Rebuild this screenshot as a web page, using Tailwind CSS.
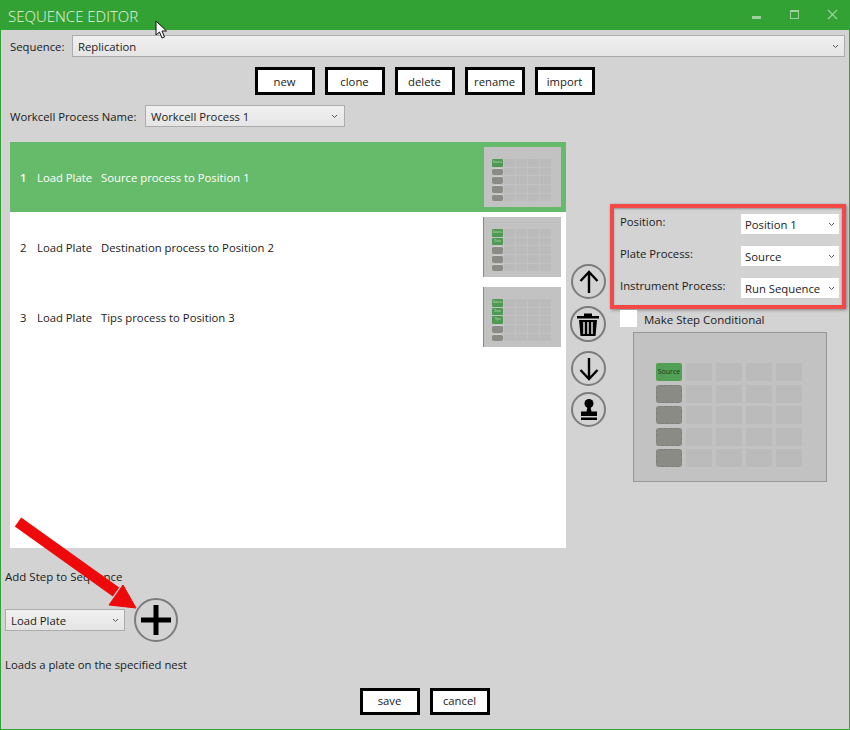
<!DOCTYPE html>
<html>
<head>
    <title>Sequence Editor</title>
    <script src="https://cdn.jsdelivr.net/npm/@tailwindcss/browser@4"></script>
</head>
<body class="bg-[#d3d3d3]">
    <div class="relative w-[850px] h-[730px] overflow-hidden flex flex-col bg-[#d3d3d3] border-x border-b border-[#33a235] font-['Open_Sans',sans-serif] text-[11.3px] text-[#1a1a1a]">
        <!-- title bar -->
        <div class="h-[30px] shrink-0 -mx-px bg-[#33a235] flex items-center justify-between pl-2 pr-[11px]">
            <span class="mt-[2px] text-[#e8f4e0] text-[15px] font-light">SEQUENCE EDITOR</span>
            <div class="flex items-center gap-[25px]">
                <svg width="13" height="12" viewBox="0 0 13 12"><rect x="2" y="7" width="9" height="3" fill="#9ed09f"/></svg>
                <svg width="13" height="12" viewBox="0 0 13 12"><rect x="2.500" y="1.500" width="8" height="8" fill="none" stroke="#9ed09f"/><rect x="2" y="1" width="9" height="2" fill="#9ed09f"/></svg>
                <svg width="13" height="12" viewBox="0 0 13 12"><path d="M2 1l9 9M11 1l-9 9" stroke="#9ed09f" stroke-width="1.200"/></svg>
            </div>
        </div>

        <!-- sequence selector -->
        <div class="flex items-center mt-[5px] pl-[9px] pr-1 h-[22px]">
            <span class="w-[62px] mt-[2px]">Sequence:</span>
            <div class="flex-1 h-full flex items-center justify-between px-[5px] border border-[#acacac] bg-gradient-to-b from-[#f0f0f0] to-[#e5e5e5]">
                <span class="mt-[2px]">Replication</span>
                <svg width="7" height="5" viewBox="0 0 7 5"><path d="M1 1l2.500 2.500L6 1" fill="none" stroke="#555" stroke-width="1"/></svg>
            </div>
        </div>

        <!-- sequence actions -->
        <div class="flex justify-center gap-[10px] mt-[10px] h-[28px] pr-[1px]">
            <button class="w-[60px] pt-[2px] border-[3px] border-black bg-white font-medium">new</button>
            <button class="w-[60px] pt-[2px] border-[3px] border-black bg-white font-medium">clone</button>
            <button class="w-[60px] pt-[2px] border-[3px] border-black bg-white font-medium">delete</button>
            <button class="w-[60px] pt-[2px] border-[3px] border-black bg-white font-medium">rename</button>
            <button class="w-[60px] pt-[2px] border-[3px] border-black bg-white font-medium">import</button>
        </div>

        <!-- workcell process -->
        <div class="flex items-center mt-[10px] pl-[9px] h-[22px]">
            <span class="w-[135px] mt-[2px]">Workcell Process Name:</span>
            <div class="w-[200px] h-full flex items-center justify-between px-[5px] border border-[#acacac] bg-gradient-to-b from-[#f0f0f0] to-[#e5e5e5]">
                <span class="mt-[2px]">Workcell Process 1</span>
                <svg width="7" height="5" class="mr-[1px]" viewBox="0 0 7 5"><path d="M1 1l2.500 2.500L6 1" fill="none" stroke="#555" stroke-width="1"/></svg>
            </div>
        </div>

        <!-- steps and step detail -->
        <div class="flex mt-[15px] pl-[9px] h-[406px]">
            <div class="w-[556px] h-full bg-white">
                <div class="h-[70px] bg-[#66bb6a] text-white flex items-center justify-between pl-[10px] pr-[5px]">
                    <div class="flex mt-[2px]"><span class="w-[17px] font-semibold">1</span><span class="w-[64px]">Load Plate</span><span>Source process to Position 1</span></div>
                    <div data-thumb="Source" class="w-[77px] h-[60px] bg-[#c2c2c2] pl-[8px] pt-[12px] grid grid-cols-[11px_11px_11px_11px_11px] auto-rows-[7.500px] gap-x-px gap-y-[1.200px]"></div>
                </div>
                <div class="h-[70px] flex items-center justify-between pl-[10px] pr-[5px]">
                    <div class="flex mt-[2px]"><span class="w-[17px]">2</span><span class="w-[64px]">Load Plate</span><span>Destination process to Position 2</span></div>
                    <div data-thumb="Source,Dest" class="w-[78px] h-[60px] bg-[#c2c2c2] border-l border-[#888] pl-[8px] pt-[12px] grid grid-cols-[11px_11px_11px_11px_11px] auto-rows-[7.500px] gap-x-px gap-y-[1.200px]"></div>
                </div>
                <div class="h-[70px] flex items-center justify-between pl-[10px] pr-[5px]">
                    <div class="flex mt-[2px]"><span class="w-[17px]">3</span><span class="w-[64px]">Load Plate</span><span>Tips process to Position 3</span></div>
                    <div data-thumb="Source,Dest,Tips" class="w-[78px] h-[60px] bg-[#c2c2c2] border-l border-[#888] pl-[8px] pt-[12px] grid grid-cols-[11px_11px_11px_11px_11px] auto-rows-[7.500px] gap-x-px gap-y-[1.200px]"></div>
                </div>
            </div>

            <!-- step buttons -->
            <div class="w-[35px] ml-[5px] mt-[122px] flex flex-col">
                <div class="w-[35px] h-[35px] rounded-full border-2 border-[#7c7c7c] flex items-center justify-center">
                    <svg width="24" height="26" viewBox="0 0 24 26"><path d="M12 24V3M3.500 12l8.500-9 8.500 9" fill="none" stroke="#000" stroke-width="2.400"/></svg>
                </div>
                <div class="w-[36px] h-[36px] mt-[7px] -ml-px rounded-full border-2 border-[#7c7c7c] flex items-center justify-center">
                    <svg width="24" height="25" viewBox="0 0 24 25"><path d="M1 4h22v2.500H1zM8 4V1.500h8V4" fill="#000"/><path d="M3 8h18l-1.500 16h-15z" fill="#000"/><path d="M8 10v12M12 10v12M16 10v12" stroke="#d3d3d3" stroke-width="1.600"/></svg>
                </div>
                <div class="w-[35px] h-[35px] mt-[9px] rounded-full border-2 border-[#7c7c7c] flex items-center justify-center">
                    <svg width="24" height="26" viewBox="0 0 24 26"><path d="M12 2v21M3.500 14l8.500 9 8.500-9" fill="none" stroke="#000" stroke-width="2.400"/></svg>
                </div>
                <div class="w-[35px] h-[35px] mt-[6px] rounded-full border-2 border-[#7c7c7c] flex items-center justify-center">
                    <svg width="24" height="24" viewBox="0 0 24 24"><circle cx="12" cy="5.500" r="4.500" fill="#000"/><path d="M10.500 9h3l1 4.500h-5zM4 13.500h16v4.500H4zM4 19.500h16V22H4z" fill="#000"/></svg>
                </div>
            </div>

            <!-- step detail -->
            <div class="ml-[4px] mt-[62px] w-[236px] flex flex-col">
                <div class="h-[105px] border-4 border-[#f44848] shadow-[1px_1px_3px_rgba(0,0,0,0.4),inset_0_1px_2px_rgba(0,0,0,0.3)] pl-[6px] pr-[2px] pt-[5px] flex flex-col gap-[10px]">
                    <div class="flex items-center justify-between h-[22px]">
                        <span class="-mt-[4px]">Position:</span>
                        <div class="w-[100px] h-full bg-white border border-[#d3d3d3] flex items-center justify-between pl-[4px] pr-[4px]"><span class="mt-[2px]">Position 1</span><svg width="7" height="5" viewBox="0 0 7 5"><path d="M1 1l2.500 2.500L6 1" fill="none" stroke="#555"/></svg></div>
                    </div>
                    <div class="flex items-center justify-between h-[22px]">
                        <span class="-mt-[4px]">Plate Process:</span>
                        <div class="w-[100px] h-full bg-white border border-[#d3d3d3] flex items-center justify-between pl-[4px] pr-[4px]"><span class="mt-[2px]">Source</span><svg width="7" height="5" viewBox="0 0 7 5"><path d="M1 1l2.500 2.500L6 1" fill="none" stroke="#555"/></svg></div>
                    </div>
                    <div class="flex items-center justify-between h-[22px]">
                        <span class="-mt-[4px]">Instrument Process:</span>
                        <div class="w-[100px] h-full bg-white border border-[#d3d3d3] flex items-center justify-between pl-[4px] pr-[4px]"><span class="mt-[2px]">Run Sequence</span><svg width="7" height="5" viewBox="0 0 7 5"><path d="M1 1l2.500 2.500L6 1" fill="none" stroke="#555"/></svg></div>
                    </div>
                </div>
                <div class="flex items-center ml-[10px] mt-[1px] h-[17px]">
                    <div class="w-[17px] h-[17px] bg-white"></div>
                    <span class="ml-[7px] mt-[2px] text-[11.5px]">Make Step Conditional</span>
                </div>
                <div id="bigThumb" class="ml-[23px] mt-[5px] w-[194px] h-[150px] bg-[#c2c2c2] border border-[#969696] pl-[22px] pt-[30px] grid grid-cols-[26px_26px_26px_26px_26px] auto-rows-[18px] gap-x-[4px] gap-y-[3.600px]"></div>
            </div>
        </div>

        <!-- add step -->
        <div class="pl-[4px] mt-[22px] leading-[14px] text-[11.5px]">Add Step to Sequence</div>
        <div class="flex items-center pl-[4px] mt-[14px] h-[44px]">
            <div class="w-[120px] h-[22px] flex items-center justify-between px-[5px] border border-[#acacac] bg-gradient-to-b from-[#f0f0f0] to-[#e5e5e5]">
                <span class="mt-[2px]">Load Plate</span>
                <svg width="7" height="5" viewBox="0 0 7 5"><path d="M1 1l2.500 2.500L6 1" fill="none" stroke="#555"/></svg>
            </div>
            <div class="ml-[9px] w-[44px] h-[44px] rounded-full border-2 border-[#7c7c7c] flex items-center justify-center">
                <svg width="30" height="30" viewBox="0 0 30 30"><path d="M15 0v30M0 15h30" stroke="#000" stroke-width="5"/></svg>
            </div>
        </div>
        <div class="pl-[4px] mt-[16px] leading-[14px]">Loads a plate on the specified nest</div>

        <!-- save / cancel -->
        <div class="flex justify-center gap-[10px] mt-[16px] h-[27px] pr-[1px]">
            <button class="w-[60px] border-[3px] border-black bg-white font-medium">save</button>
            <button class="w-[60px] border-[3px] border-black bg-white font-medium">cancel</button>
        </div>

        <!-- annotation arrow -->
        <svg class="absolute left-0 top-0 pointer-events-none" width="850" height="730" viewBox="0 0 850 730">
            <path d="M17 522L115 592" stroke="#ee0a0a" stroke-width="11" fill="none"/>
            <path d="M135 608L108 605L122 585Z" fill="#ee0a0a" stroke="#ee0a0a" stroke-width="1"/>
        </svg>

        <!-- mouse cursor -->
        <svg class="absolute left-[154px] top-[20px]" width="13" height="20" viewBox="0 0 13 20"><path d="M1 1v14l3.500-3 2.500 6 2.500-1-2.500-6h4.500z" fill="#fff" stroke="#111" stroke-width="1"/></svg>
    </div>

    <script>
        // Plate layout thumbnails: first column holds the nests, the rest are empty wells
        document.querySelectorAll('[data-thumb]').forEach(thumb => {
            const loaded = thumb.dataset.thumb.split(',');
            for (let row = 0; row < 5; row++) {
                for (let col = 0; col < 5; col++) {
                    const cell = document.createElement('div');
                    if (col > 0) cell.className = 'bg-[#bbbbbb]';
                    else if (row < loaded.length) {
                        cell.className = 'bg-[#4f9a52] text-[3px] leading-[7.500px] text-center text-[#cfe3cf] overflow-hidden rounded-[1px]';
                        cell.textContent = loaded[row];
                    } else cell.className = 'bg-[#8b8b85] rounded-[2px] border-t border-[#d0d0d0]';
                    thumb.appendChild(cell);
                }
            }
        });

        const big = document.getElementById('bigThumb');
        for (let row = 0; row < 5; row++) {
            for (let col = 0; col < 5; col++) {
                const cell = document.createElement('div');
                if (col > 0) cell.className = 'bg-[#bbbbbb]';
                else if (row === 0) {
                    cell.className = 'bg-[#52a055] rounded-[2px] text-[7px] leading-[18px] text-center text-[#1c3a1c]';
                    cell.textContent = 'Source';
                } else cell.className = 'bg-[#8b8b85] rounded-[3px] border border-dashed border-[#7f7f78]';
                big.appendChild(cell);
            }
        }
    </script>
</body>
</html>
